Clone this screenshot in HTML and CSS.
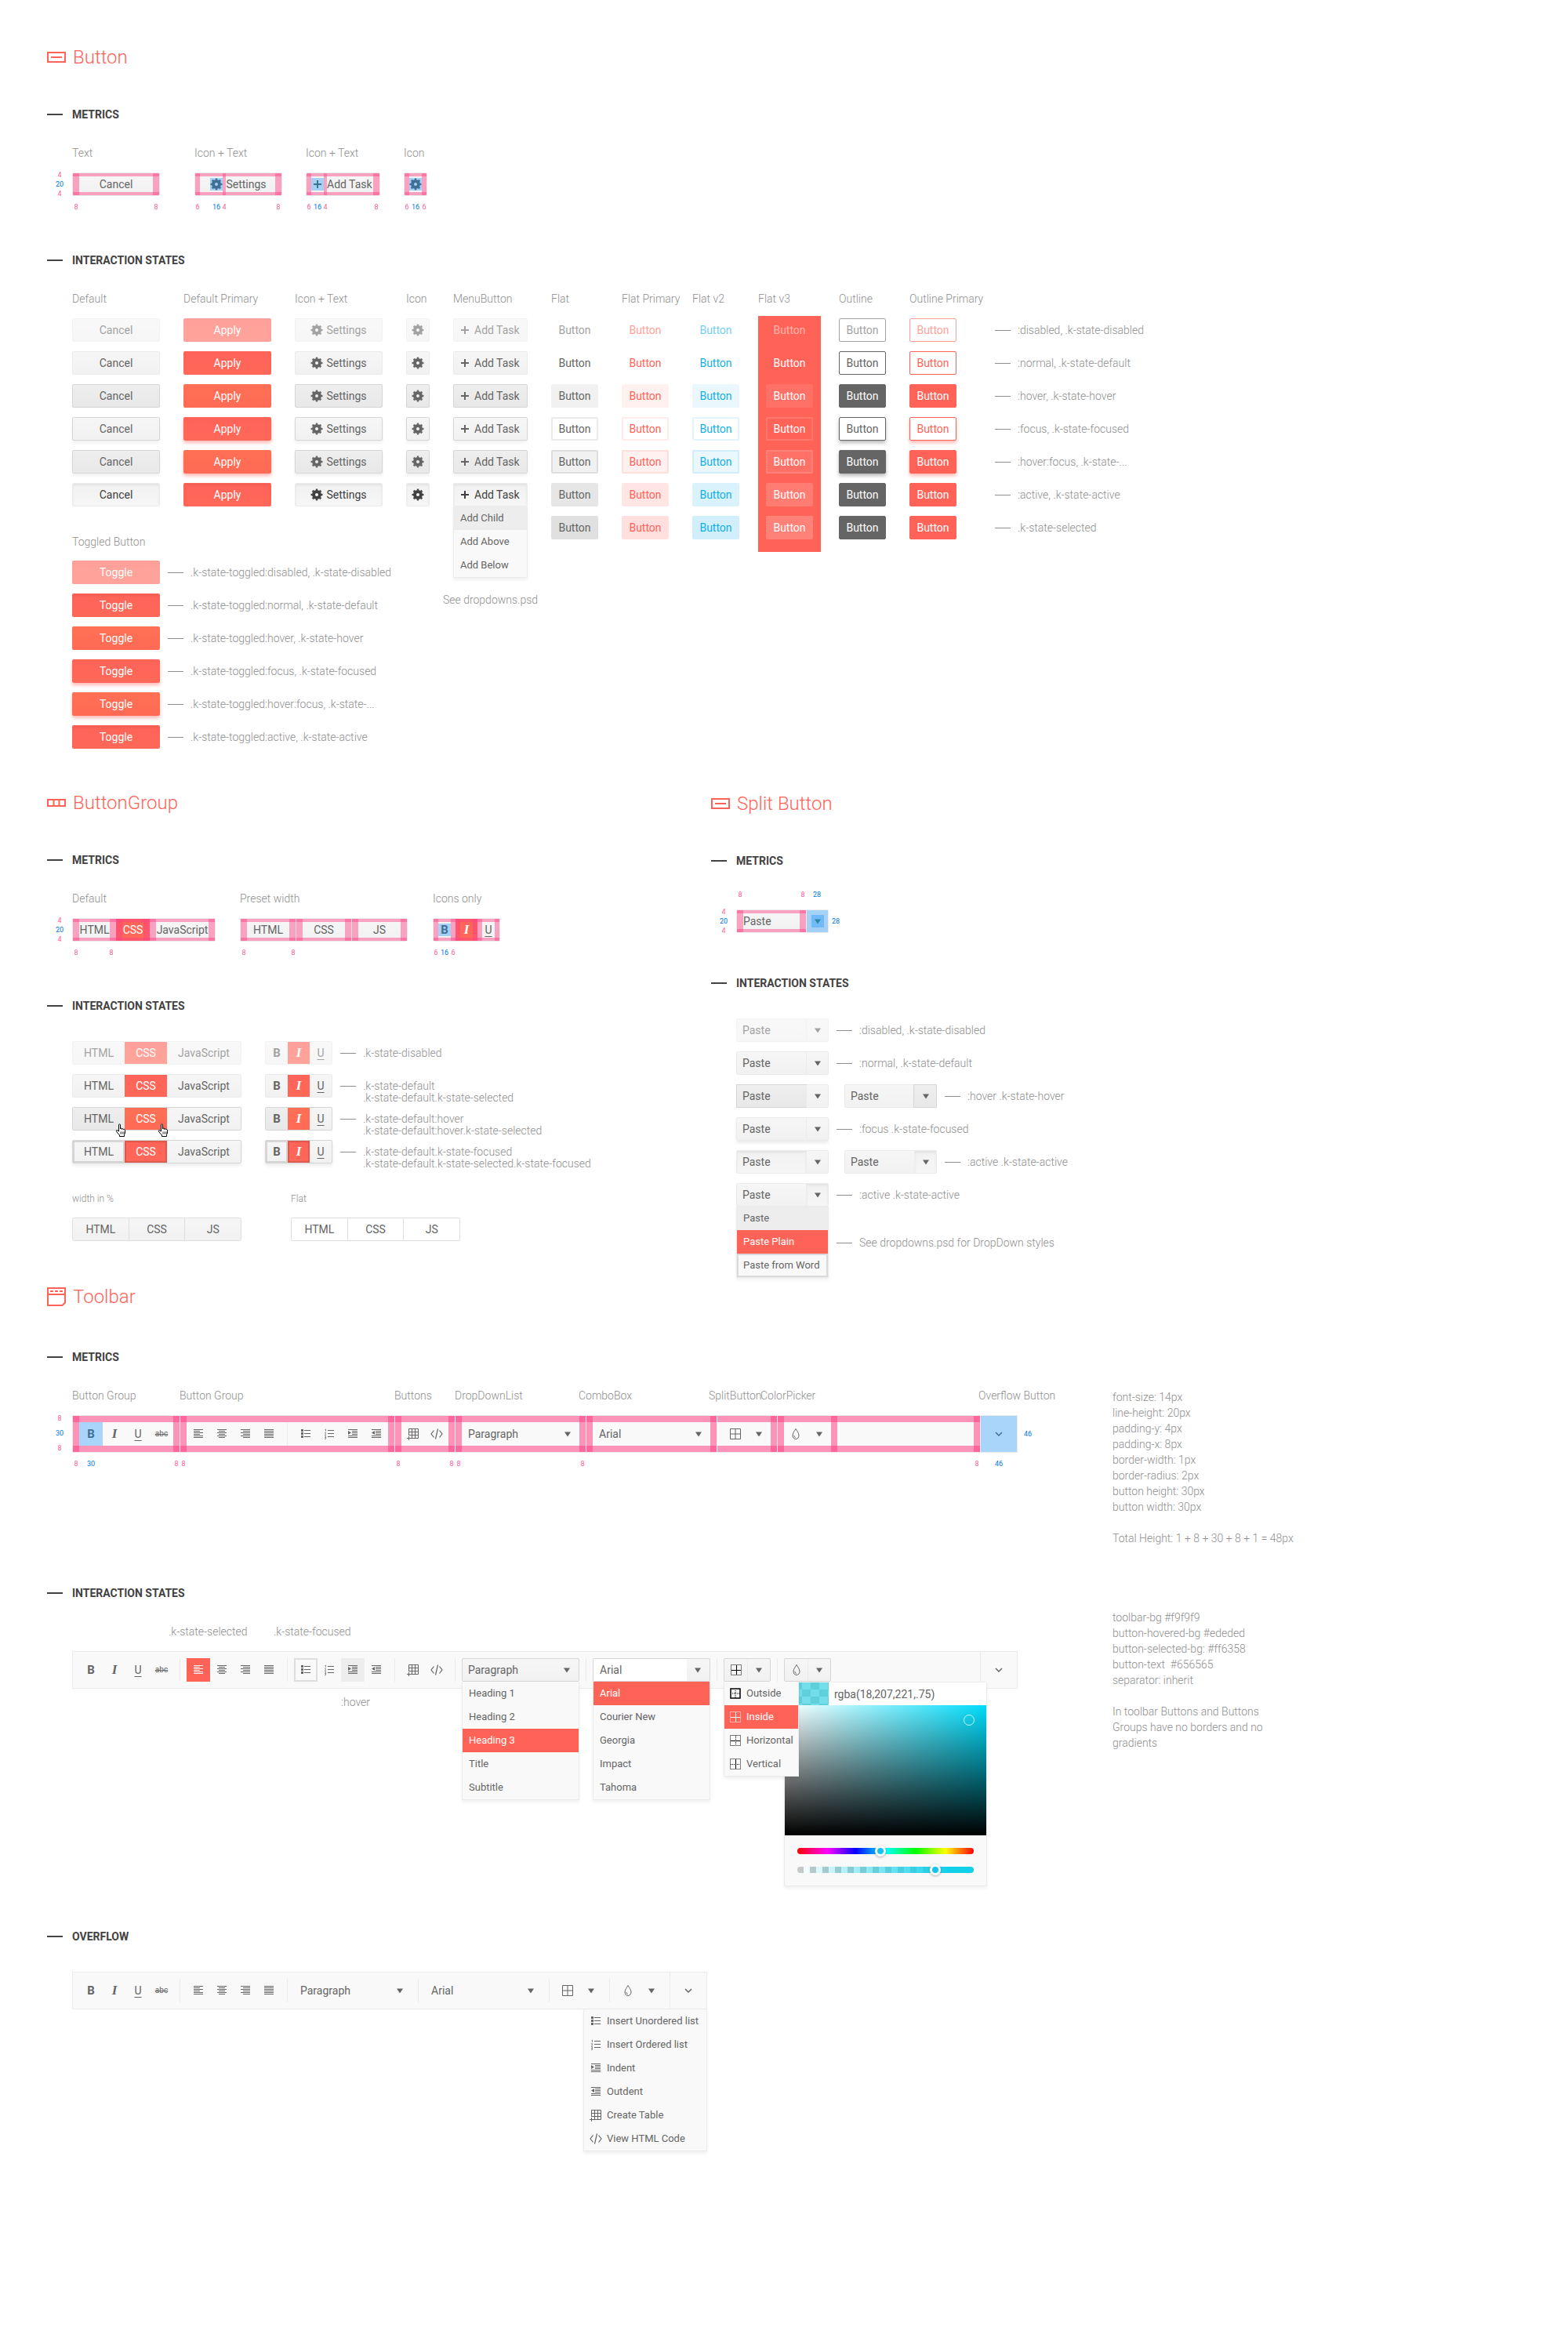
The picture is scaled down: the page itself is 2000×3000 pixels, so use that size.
FILE: index.html
```html
<!DOCTYPE html>
<html lang="en">
<head>
<meta charset="utf-8">
<title>Button, ButtonGroup, Split Button and Toolbar</title>
<link rel="stylesheet" href="styles.css">
</head>
<body>
<svg class="sprite" aria-hidden="true">
  <symbol id="gear" viewBox="0 0 16 16"><circle cx="8" cy="8" r="4" fill="none" stroke="currentColor" stroke-width="4"/><circle cx="8" cy="8" r="6.5" fill="none" stroke="currentColor" stroke-width="2" pathLength="16" stroke-dasharray="1 1" stroke-dashoffset=".5"/></symbol>
  <symbol id="plus" viewBox="0 0 16 16"><path d="M8 3v10M3 8h10" stroke="currentColor" stroke-width="2"/></symbol>
  <symbol id="caret" viewBox="0 0 16 16"><path d="M4 5.500h8l-4 6z" fill="currentColor"/></symbol>
  <symbol id="chevron" viewBox="0 0 16 16"><path d="M4 6l4 4 4-4" fill="none" stroke="currentColor" stroke-width="1.500"/></symbol>
  <symbol id="left" viewBox="0 0 16 16"><path d="M2 2.500h12M2 4.500h8M2 6.500h12M2 8.500h8M2 10.500h12M2 12.500h12" stroke="currentColor"/></symbol>
  <symbol id="center" viewBox="0 0 16 16"><path d="M2 2.500h12M4 4.500h8M2 6.500h12M4 8.500h8M2 10.500h12M4 12.500h8" stroke="currentColor"/></symbol>
  <symbol id="right" viewBox="0 0 16 16"><path d="M2 2.500h12M5 4.500h9M2 6.500h12M5 8.500h9M2 10.500h12M5 12.500h9" stroke="currentColor"/></symbol>
  <symbol id="justify" viewBox="0 0 16 16"><path d="M2 2.500h12M2 4.500h12M2 6.500h12M2 8.500h12M2 10.500h12M2 12.500h12" stroke="currentColor"/></symbol>
  <symbol id="ul" viewBox="0 0 16 16"><path d="M6 3.500h8M6 7.500h8M6 11.500h8" stroke="currentColor"/><path d="M2 3.500h3M2 7.500h3M2 11.500h3" stroke="currentColor" stroke-width="3"/></symbol>
  <symbol id="ol" viewBox="0 0 16 16"><path d="M6 3.500h8M6 7.500h8M6 11.500h8" stroke="currentColor"/><path d="M2.500 2.500l1-.5v3M2 6.500h1.500v1L2.500 9H4M2 10.500h1.500v4H2M2 12.500h1.500" fill="none" stroke="currentColor" stroke-width=".7"/></symbol>
  <symbol id="indent" viewBox="0 0 16 16"><path d="M2 2.500h12M7 4.500h7M7 6.500h7M7 8.500h7M2 10.500h12M2 12.500h12" stroke="currentColor"/><path d="M2 4l4 2.500L2 9z" fill="currentColor"/></symbol>
  <symbol id="outdent" viewBox="0 0 16 16"><path d="M2 2.500h12M7 4.500h7M7 6.500h7M7 8.500h7M2 10.500h12M2 12.500h12" stroke="currentColor"/><path d="M6 4L2 6.500 6 9z" fill="currentColor"/></symbol>
  <symbol id="table" viewBox="0 0 16 16"><path d="M2.500 10V1.500h12v12H5M6.500 1.500v12M10.500 1.500v12M2.500 5.500h12M2.500 9.500h12M2.500 11v5M0 13.500h5" fill="none" stroke="currentColor"/></symbol>
  <symbol id="code" viewBox="0 0 16 16"><path d="M4.500 3.500L1 8l3.500 4.500M11.500 3.500L15 8l-3.500 4.500M9.500 1.500l-3 13" fill="none" stroke="currentColor" stroke-width="1.200"/></symbol>
  <symbol id="grid" viewBox="0 0 16 16"><path d="M1.500 1.500h13v13h-13zM8 1.500v13M1.500 8h13" fill="none" stroke="currentColor"/></symbol>
  <symbol id="drop" viewBox="0 0 16 16"><path d="M8 1.500C6.500 4 4 7 4 10a4 4.500 0 0 0 8 0C12 7 9.500 4 8 1.500zM5.800 10a2.500 2.500 0 0 0 2 2.500" fill="none" stroke="currentColor"/></symbol>
  <symbol id="b-outside" viewBox="0 0 16 16"><path d="M2 2h12v12H2z" fill="none" stroke="currentColor" stroke-width="1.500"/><path d="M8 4v9M4 8h9" stroke="currentColor" stroke-dasharray="1 1"/></symbol>
  <symbol id="b-inside" viewBox="0 0 16 16"><path d="M1.500 1.500h13v13h-13z" fill="none" stroke="currentColor" stroke-dasharray="1 1"/><path d="M8.500 2v12M2 8.500h12" stroke="currentColor"/></symbol>
  <symbol id="b-horizontal" viewBox="0 0 16 16"><path d="M1.500 1.500h13v13h-13zM8.500 2v12" fill="none" stroke="currentColor" stroke-dasharray="1 1"/><path d="M2 8.500h12" stroke="currentColor"/></symbol>
  <symbol id="b-vertical" viewBox="0 0 16 16"><path d="M1.500 1.500h13v13h-13zM2 8.500h12" fill="none" stroke="currentColor" stroke-dasharray="1 1"/><path d="M8.500 2v12" stroke="currentColor"/></symbol>
  <symbol id="hand" viewBox="0 0 15 17"><path d="M4.500 10V1.800c0-1.300 2-1.300 2 0V7c0-1.200 2-1.200 2 0v.5c0-1.200 2-1 2 .2V8c0-1 2-.8 2 .4V12l-1 2.500v2h-6v-1.500L2 11c-1.200-1.800-.7-3 1-2z" fill="#fff" stroke="#000"/><path d="M7 10.500v3M9 10.500v3M11 10.500v3" stroke="#000" stroke-width=".8"/></symbol>
</svg>

<main class="sheet">
<section>
  <h1 class="title"><svg class="mark" viewBox="0 0 24 24"><path d="M1 6h22v12H1zM5 12h14" fill="none" stroke="currentColor" stroke-width="2"/></svg>Button</h1>

  <h2 class="sub">Metrics</h2>
  <div class="metrics">
    <div class="vruler"><span>4</span><span class="size">20</span><span>4</span></div>
    <div class="spec spec-text"><p class="label">Text</p>
      <button class="btn wide pad-text">Cancel</button>
      <div class="ruler ends"><span>8</span><span>8</span></div></div>
    <div class="spec spec-settings"><p class="label">Icon + Text</p>
      <button class="btn wide pad-settings"><svg class="ico sized"><use href="#gear"/></svg>Settings</button>
      <div class="ruler r-settings"><span>6</span><span class="size">16</span><span>4</span><span>8</span></div></div>
    <div class="spec spec-add"><p class="label">Icon + Text</p>
      <button class="btn menu pad-add"><svg class="ico sized"><use href="#plus"/></svg>Add Task</button>
      <div class="ruler r-add"><span>6</span><span class="size">16</span><span>4</span><span>8</span></div></div>
    <div class="spec"><p class="label">Icon</p>
      <button class="btn square pad-icon" aria-label="Settings"><svg class="ico sized"><use href="#gear"/></svg></button>
      <div class="ruler r-icon"><span>6</span><span class="size">16</span><span>6</span></div></div>
  </div>

  <h2 class="sub after-ruler">Interaction States</h2>
  <div class="states">
    <div class="states-main">
      <div class="matrix matrix-main">
        <div class="col"><p class="label">Default</p>
          <button class="btn wide disabled" disabled>Cancel</button>
          <button class="btn wide">Cancel</button>
          <button class="btn wide hover">Cancel</button>
          <button class="btn wide focus">Cancel</button>
          <button class="btn wide hover focus">Cancel</button>
          <button class="btn wide active">Cancel</button></div>
        <div class="col"><p class="label">Default Primary</p>
          <button class="btn wide primary disabled" disabled>Apply</button>
          <button class="btn wide primary">Apply</button>
          <button class="btn wide primary hover">Apply</button>
          <button class="btn wide primary focus">Apply</button>
          <button class="btn wide primary hover focus">Apply</button>
          <button class="btn wide primary active">Apply</button></div>
        <div class="col"><p class="label">Icon + Text</p>
          <button class="btn wide disabled" disabled><svg class="ico"><use href="#gear"/></svg>Settings</button>
          <button class="btn wide"><svg class="ico"><use href="#gear"/></svg>Settings</button>
          <button class="btn wide hover"><svg class="ico"><use href="#gear"/></svg>Settings</button>
          <button class="btn wide focus"><svg class="ico"><use href="#gear"/></svg>Settings</button>
          <button class="btn wide hover focus"><svg class="ico"><use href="#gear"/></svg>Settings</button>
          <button class="btn wide active"><svg class="ico"><use href="#gear"/></svg>Settings</button></div>
        <div class="col"><p class="label">Icon</p>
          <button class="btn square disabled" disabled aria-label="Settings"><svg class="ico"><use href="#gear"/></svg></button>
          <button class="btn square" aria-label="Settings"><svg class="ico"><use href="#gear"/></svg></button>
          <button class="btn square hover" aria-label="Settings"><svg class="ico"><use href="#gear"/></svg></button>
          <button class="btn square focus" aria-label="Settings"><svg class="ico"><use href="#gear"/></svg></button>
          <button class="btn square hover focus" aria-label="Settings"><svg class="ico"><use href="#gear"/></svg></button>
          <button class="btn square active" aria-label="Settings"><svg class="ico"><use href="#gear"/></svg></button></div>
      </div>
      <div class="toggled">
        <p class="label">Toggled Button</p>
        <div class="line"><button class="btn wide primary disabled" disabled>Toggle</button><span class="note">.k-state-toggled:disabled, .k-state-disabled</span></div>
        <div class="line"><button class="btn wide primary active">Toggle</button><span class="note">.k-state-toggled:normal, .k-state-default</span></div>
        <div class="line"><button class="btn wide primary hover">Toggle</button><span class="note">.k-state-toggled:hover, .k-state-hover</span></div>
        <div class="line"><button class="btn wide primary focus">Toggle</button><span class="note">.k-state-toggled:focus, .k-state-focused</span></div>
        <div class="line"><button class="btn wide primary hover focus">Toggle</button><span class="note">.k-state-toggled:hover:focus, .k-state-...</span></div>
        <div class="line"><button class="btn wide primary active">Toggle</button><span class="note">.k-state-toggled:active, .k-state-active</span></div>
      </div>
    </div>
    <div class="matrix matrix-more">
      <div class="col col-menu"><p class="label">MenuButton</p>
        <button class="btn menu disabled" disabled><svg class="ico"><use href="#plus"/></svg>Add Task</button>
        <button class="btn menu"><svg class="ico"><use href="#plus"/></svg>Add Task</button>
        <button class="btn menu hover"><svg class="ico"><use href="#plus"/></svg>Add Task</button>
        <button class="btn menu focus"><svg class="ico"><use href="#plus"/></svg>Add Task</button>
        <button class="btn menu hover focus"><svg class="ico"><use href="#plus"/></svg>Add Task</button>
        <div class="drop"><button class="btn menu active"><svg class="ico"><use href="#plus"/></svg>Add Task</button>
          <ul class="list"><li class="over">Add Child</li><li>Add Above</li><li>Add Below</li></ul></div>
        <p class="caption">See dropdowns.psd</p></div>
      <div class="col"><p class="label">Flat</p>
        <button class="flat disabled" disabled>Button</button><button class="flat">Button</button><button class="flat hover">Button</button><button class="flat focus">Button</button><button class="flat hover focus">Button</button><button class="flat active">Button</button><button class="flat selected">Button</button></div>
      <div class="col red"><p class="label">Flat Primary</p>
        <button class="flat disabled" disabled>Button</button><button class="flat">Button</button><button class="flat hover">Button</button><button class="flat focus">Button</button><button class="flat hover focus">Button</button><button class="flat active">Button</button><button class="flat selected">Button</button></div>
      <div class="col blue"><p class="label">Flat v2</p>
        <button class="flat disabled" disabled>Button</button><button class="flat">Button</button><button class="flat hover">Button</button><button class="flat focus">Button</button><button class="flat hover focus">Button</button><button class="flat active">Button</button><button class="flat selected">Button</button></div>
      <div class="col col-panel"><p class="label">Flat v3</p>
        <div class="panel white">
        <button class="flat disabled" disabled>Button</button><button class="flat">Button</button><button class="flat hover">Button</button><button class="flat focus">Button</button><button class="flat hover focus">Button</button><button class="flat active">Button</button><button class="flat selected">Button</button></div></div>
      <div class="col"><p class="label">Outline</p>
        <button class="outline disabled" disabled>Button</button><button class="outline">Button</button><button class="outline hover">Button</button><button class="outline focus">Button</button><button class="outline hover focus">Button</button><button class="outline active">Button</button><button class="outline selected">Button</button></div>
      <div class="col red"><p class="label">Outline Primary</p>
        <button class="outline disabled" disabled>Button</button><button class="outline">Button</button><button class="outline hover">Button</button><button class="outline focus">Button</button><button class="outline hover focus">Button</button><button class="outline active">Button</button><button class="outline selected">Button</button></div>
      <div class="col col-notes">
        <span class="note">:disabled, .k-state-disabled</span><span class="note">:normal, .k-state-default</span><span class="note">:hover, .k-state-hover</span><span class="note">:focus, .k-state-focused</span><span class="note">:hover:focus, .k-state-...</span><span class="note">:active, .k-state-active</span><span class="note">.k-state-selected</span></div>
    </div>
  </div>
</section>

<div class="pair">
<section class="pair-group">
  <h1 class="title"><svg class="mark" viewBox="0 0 24 24"><path d="M1 8h22v8H1zM8.500 8v8M15.500 8v8" fill="none" stroke="currentColor" stroke-width="2"/></svg>ButtonGroup</h1>
  <h2 class="sub">Metrics</h2>
  <div class="metrics">
    <div class="vruler"><span>4</span><span class="size">20</span><span>4</span></div>
    <div class="spec spec-group"><p class="label">Default</p>
      <div class="group snug"><button class="pad-text">HTML</button><button class="on pad-text">CSS</button><button class="pad-text">JavaScript</button></div>
      <div class="ruler r-group"><span>8</span><span>8</span></div></div>
    <div class="spec spec-preset"><p class="label">Preset width</p>
      <div class="group even"><button class="pad-text">HTML</button><button class="pad-text">CSS</button><button class="pad-text">JS</button></div>
      <div class="ruler r-preset"><span>8</span><span>8</span></div></div>
    <div class="spec"><p class="label">Icons only</p>
      <div class="group format"><button class="pad-icon"><b class="sized">B</b></button><button class="on pad-icon"><i>I</i></button><button class="pad-icon"><u>U</u></button></div>
      <div class="ruler r-icon"><span>6</span><span class="size">16</span><span>6</span></div></div>
  </div>

  <h2 class="sub after-ruler">Interaction States</h2>
  <div class="rows">
    <div class="line"><div class="group text disabled"><button disabled>HTML</button><button class="on" disabled>CSS</button><button disabled>JavaScript</button></div>
      <div class="group format disabled"><button disabled><b>B</b></button><button class="on" disabled><i>I</i></button><button disabled><u>U</u></button></div>
      <span class="note">.k-state-disabled</span></div>
    <div class="line"><div class="group text"><button>HTML</button><button class="on">CSS</button><button>JavaScript</button></div>
      <div class="group format"><button><b>B</b></button><button class="on"><i>I</i></button><button><u>U</u></button></div>
      <span class="note">.k-state-default<br>.k-state-default.k-state-selected</span></div>
    <div class="line"><div class="group text strong"><button class="hover">HTML<svg class="pointer"><use href="#hand"/></svg></button><button class="on hover">CSS<svg class="pointer"><use href="#hand"/></svg></button><button>JavaScript</button></div>
      <div class="group format strong"><button class="hover"><b>B</b></button><button class="on hover"><i>I</i></button><button><u>U</u></button></div>
      <span class="note">.k-state-default:hover<br>.k-state-default:hover.k-state-selected</span></div>
    <div class="line"><div class="group text strong raised"><button class="focus">HTML</button><button class="on focus">CSS</button><button>JavaScript</button></div>
      <div class="group format strong raised"><button class="focus"><b>B</b></button><button class="on focus"><i>I</i></button><button><u>U</u></button></div>
      <span class="note">.k-state-default.k-state-focused<br>.k-state-default.k-state-selected.k-state-focused</span></div>
  </div>
  <div class="variants">
    <div><p class="label small">width in %</p>
      <div class="group even full"><button>HTML</button><button>CSS</button><button>JS</button></div></div>
    <div><p class="label small">Flat</p>
      <div class="group even full plain"><button>HTML</button><button>CSS</button><button>JS</button></div></div>
  </div>
</section>

<section class="pair-split">
  <h1 class="title"><svg class="mark" viewBox="0 0 24 24"><path d="M1 6h22v12H1zM5 12h14" fill="none" stroke="currentColor" stroke-width="2"/></svg>Split Button</h1>
  <h2 class="sub">Metrics</h2>
  <div class="metrics">
    <div class="vruler plain"><span>4</span><span class="size">20</span><span>4</span></div>
    <div class="spec">
      <div class="ruler r-split"><span>8</span><span>8</span><span class="size">28</span></div>
      <div class="split"><button class="pad-text">Paste</button><button class="boxed" aria-label="More"><svg class="ico"><use href="#caret"/></svg></button></div></div>
    <span class="side size">28</span>
  </div>
  <h2 class="sub split-states">Interaction States</h2>
  <div class="rows">
    <div class="line"><div class="split disabled"><button disabled>Paste</button><button disabled aria-label="More"><svg class="ico"><use href="#caret"/></svg></button></div><span class="note">:disabled, .k-state-disabled</span></div>
    <div class="line"><div class="split"><button>Paste</button><button aria-label="More"><svg class="ico"><use href="#caret"/></svg></button></div><span class="note">:normal, .k-state-default</span></div>
    <div class="line"><div class="split"><button class="hover">Paste</button><button aria-label="More"><svg class="ico"><use href="#caret"/></svg></button></div><div class="split second"><button>Paste</button><button class="hover" aria-label="More"><svg class="ico"><use href="#caret"/></svg></button></div><span class="note">:hover .k-state-hover</span></div>
    <div class="line"><div class="split raised"><button>Paste</button><button aria-label="More"><svg class="ico"><use href="#caret"/></svg></button></div><span class="note">:focus .k-state-focused</span></div>
    <div class="line"><div class="split"><button class="active">Paste</button><button aria-label="More"><svg class="ico"><use href="#caret"/></svg></button></div><div class="split second"><button>Paste</button><button class="active" aria-label="More"><svg class="ico"><use href="#caret"/></svg></button></div><span class="note">:active .k-state-active</span></div>
    <div class="line tall"><div class="drop"><div class="split"><button>Paste</button><button class="active" aria-label="More"><svg class="ico"><use href="#caret"/></svg></button></div>
      <ul class="list"><li class="over">Paste</li><li class="chosen">Paste Plain</li><li class="framed">Paste from Word</li></ul></div>
      <div class="notes"><span class="note">:active .k-state-active</span><span class="note">See dropdowns.psd for DropDown styles</span></div></div>
  </div>
</section>
</div>

<section class="toolbars">
  <h1 class="title"><svg class="mark" viewBox="0 0 24 24"><path d="M1 1h22v18.500L19.500 23H1zM1 9h22" fill="none" stroke="currentColor" stroke-width="2"/><path d="M4 5h16" stroke="currentColor" stroke-width="2" stroke-dasharray="4 2"/></svg>Toolbar</h1>

  <div class="described">
    <div class="demo">
      <h2 class="sub">Metrics</h2>
      <div class="metrics">
        <div class="vruler far"><span>8</span><span class="size">30</span><span>8</span></div>
        <div class="spec">
          <div class="tb-labels"><p class="label">Button Group</p><p class="label">Button Group</p><p class="label">Buttons</p><p class="label">DropDownList</p><p class="label">ComboBox</p><p class="label">SplitButton</p><p class="label">ColorPicker</p><p class="label">Overflow Button</p></div>
          <div class="toolbar measured">
            <div class="part"><button class="box"><b>B</b></button><button><i>I</i></button><button><u>U</u></button><button><s>abc</s></button></div>
            <span class="sep"></span>
            <div class="part"><button aria-label="Left"><svg class="ico"><use href="#left"/></svg></button><button aria-label="Center"><svg class="ico"><use href="#center"/></svg></button><button aria-label="Right"><svg class="ico"><use href="#right"/></svg></button><button aria-label="Justify"><svg class="ico"><use href="#justify"/></svg></button><span class="inner"></span><button aria-label="Bullets"><svg class="ico"><use href="#ul"/></svg></button><button aria-label="Numbers"><svg class="ico"><use href="#ol"/></svg></button><button aria-label="Indent"><svg class="ico"><use href="#indent"/></svg></button><button aria-label="Outdent"><svg class="ico"><use href="#outdent"/></svg></button></div>
            <span class="sep"></span>
            <div class="part"><button aria-label="Table"><svg class="ico"><use href="#table"/></svg></button><button aria-label="Code"><svg class="ico"><use href="#code"/></svg></button></div>
            <span class="sep"></span>
            <div class="part"><span class="picker"><select aria-label="Format"><option>Paragraph</option></select><svg class="ico"><use href="#caret"/></svg></span></div>
            <span class="sep"></span>
            <div class="part"><span class="picker"><input aria-label="Font" value="Arial"><svg class="ico"><use href="#caret"/></svg></span></div>
            <span class="sep"></span>
            <div class="part open-left"><button aria-label="Borders"><svg class="ico"><use href="#grid"/></svg></button><button aria-label="More"><svg class="ico"><use href="#caret"/></svg></button></div>
            <span class="sep"></span>
            <div class="part"><button aria-label="Color"><svg class="ico"><use href="#drop"/></svg></button><button aria-label="More"><svg class="ico"><use href="#caret"/></svg></button></div>
            <div class="part open-left rest"></div>
            <button class="more box" aria-label="Overflow"><svg class="ico"><use href="#chevron"/></svg></button>
          </div>
          <div class="ruler r-toolbar"><span>8</span><span class="size">30</span><span>8</span><span>8</span><span>8</span><span>8</span><span>8</span><span>8</span><span>8</span><span class="size">46</span></div>
        </div>
        <span class="side far size">46</span>
      </div>
    </div>
    <aside class="facts facts-size"><p>font-size: 14px</p><p>line-height: 20px</p><p>padding-y: 4px</p><p>padding-x: 8px</p><p>border-width: 1px</p><p>border-radius: 2px</p><p>button height: 30px</p><p>button width: 30px</p><p class="apart">Total Height: 1 + 8 + 30 + 8 + 1 = 48px</p></aside>
  </div>

  <div class="described second-demo">
    <div class="demo">
      <h2 class="sub">Interaction States</h2>
      <div class="body">
        <div class="state-labels"><p class="label">.k-state-selected</p><p class="label">.k-state-focused</p></div>
        <div class="toolbar">
          <div class="part"><button><b>B</b></button><button><i>I</i></button><button><u>U</u></button><button><s>abc</s></button></div>
          <span class="sep"></span>
          <div class="part"><button class="chosen" aria-label="Left"><svg class="ico"><use href="#left"/></svg></button><button aria-label="Center"><svg class="ico"><use href="#center"/></svg></button><button aria-label="Right"><svg class="ico"><use href="#right"/></svg></button><button aria-label="Justify"><svg class="ico"><use href="#justify"/></svg></button><span class="inner"></span><button class="framed" aria-label="Bullets"><svg class="ico"><use href="#ul"/></svg></button><button aria-label="Numbers"><svg class="ico"><use href="#ol"/></svg></button><button class="over" aria-label="Indent"><svg class="ico"><use href="#indent"/></svg></button><button aria-label="Outdent"><svg class="ico"><use href="#outdent"/></svg></button></div>
          <span class="sep"></span>
          <div class="part"><button aria-label="Table"><svg class="ico"><use href="#table"/></svg></button><button aria-label="Code"><svg class="ico"><use href="#code"/></svg></button></div>
          <span class="sep"></span>
          <div class="part"><div class="anchor"><span class="picker opened"><select aria-label="Format"><option>Paragraph</option></select><svg class="ico"><use href="#caret"/></svg></span>
            <ul class="list popup"><li>Heading 1</li><li>Heading 2</li><li class="chosen">Heading 3</li><li>Title</li><li>Subtitle</li></ul></div></div>
          <span class="sep"></span>
          <div class="part"><div class="anchor"><span class="picker opened combo"><input aria-label="Font" value="Arial"><svg class="ico"><use href="#caret"/></svg></span>
            <ul class="list popup"><li class="chosen">Arial</li><li>Courier New</li><li>Georgia</li><li>Impact</li><li>Tahoma</li></ul></div></div>
          <span class="sep"></span>
          <div class="part"><div class="anchor front"><div class="split tool"><button class="dark" aria-label="Borders"><svg class="ico"><use href="#b-inside"/></svg></button><button aria-label="More"><svg class="ico"><use href="#caret"/></svg></button></div>
            <ul class="list popup borders"><li><svg class="ico dark"><use href="#b-outside"/></svg>Outside</li><li class="chosen"><svg class="ico"><use href="#b-inside"/></svg>Inside</li><li><svg class="ico dark"><use href="#b-horizontal"/></svg>Horizontal</li><li><svg class="ico dark"><use href="#b-vertical"/></svg>Vertical</li></ul></div></div>
          <span class="sep"></span>
          <div class="part"><div class="anchor"><div class="split tool"><button aria-label="Color"><svg class="ico"><use href="#drop"/></svg></button><button aria-label="More"><svg class="ico"><use href="#caret"/></svg></button></div>
            <div class="popup colors">
              <div class="value"><span class="swatch"></span><input aria-label="Color value" value="rgba(18,207,221,.75)"></div>
              <div class="field"><span class="ring"></span></div>
              <div class="sliders"><input type="range" class="hue" aria-label="Hue" value="47"><input type="range" class="alpha" aria-label="Opacity" value="80"></div>
            </div></div></div>
          <button class="more" aria-label="Overflow"><svg class="ico"><use href="#chevron"/></svg></button>
        </div>
        <p class="label hover-label">:hover</p>
      </div>
    </div>
    <aside class="facts facts-color"><p>toolbar-bg #f9f9f9</p><p>button-hovered-bg #ededed</p><p>button-selected-bg: #ff6358</p><p>button-text  #656565</p><p>separator: inherit</p><p class="apart">In toolbar Buttons and Buttons Groups have no borders and no gradients</p></aside>
  </div>

  <h2 class="sub">Overflow</h2>
  <div class="body overflow">
    <div class="toolbar">
      <div class="part"><button><b>B</b></button><button><i>I</i></button><button><u>U</u></button><button><s>abc</s></button></div>
      <span class="sep"></span>
      <div class="part"><button aria-label="Left"><svg class="ico"><use href="#left"/></svg></button><button aria-label="Center"><svg class="ico"><use href="#center"/></svg></button><button aria-label="Right"><svg class="ico"><use href="#right"/></svg></button><button aria-label="Justify"><svg class="ico"><use href="#justify"/></svg></button></div>
      <span class="sep"></span>
      <div class="part"><span class="picker"><select aria-label="Format"><option>Paragraph</option></select><svg class="ico"><use href="#caret"/></svg></span></div>
      <span class="sep"></span>
      <div class="part"><span class="picker"><input aria-label="Font" value="Arial"><svg class="ico"><use href="#caret"/></svg></span></div>
      <span class="sep"></span>
      <div class="part"><button aria-label="Borders"><svg class="ico"><use href="#grid"/></svg></button><button aria-label="More"><svg class="ico"><use href="#caret"/></svg></button></div>
      <span class="sep"></span>
      <div class="part"><button aria-label="Color"><svg class="ico"><use href="#drop"/></svg></button><button aria-label="More"><svg class="ico"><use href="#caret"/></svg></button></div>
      <button class="more" aria-label="Overflow"><svg class="ico"><use href="#chevron"/></svg></button>
    </div>
    <ul class="list tools"><li><svg class="ico"><use href="#ul"/></svg>Insert Unordered list</li><li><svg class="ico"><use href="#ol"/></svg>Insert Ordered list</li><li><svg class="ico"><use href="#indent"/></svg>Indent</li><li><svg class="ico"><use href="#outdent"/></svg>Outdent</li><li><svg class="ico"><use href="#table"/></svg>Create Table</li><li><svg class="ico"><use href="#code"/></svg>View HTML Code</li></ul>
  </div>
</section>
</main>
</body>
</html>
```
FILE: styles.css
```css
:root {
  --accent: #ff6358;
  --text: #656565;
  --muted: #8e8e8e;
  --line: #ebebeb;
  --line-strong: #d6d6d6;
  --pink: linear-gradient(rgba(255, 64, 133, .46), rgba(255, 64, 133, .46));
  --azure: rgba(0, 136, 255, .32);
  --face: linear-gradient(#f6f6f6, #f1f1f1);
  --face-hover: linear-gradient(#eeeeee, #e8e8e8);
  --face-active: linear-gradient(#f1f1f1, #f6f6f6);
  --red: linear-gradient(#ff6358, #ff6858);
  --red-hover: linear-gradient(#ff7055, #ff6a55);
}
* { box-sizing: border-box; }
body { margin: 0; background: #fff; color: var(--text); font: 14px/20px Roboto, "Liberation Sans", sans-serif; }
h1, h2, p, ul { margin: 0; padding: 0; }
ul { list-style: none; }
button, input, select { font: inherit; color: inherit; margin: 0; padding: 0; border: 0; border-radius: 0; background: none; outline: 0; }
.sprite { position: absolute; width: 0; height: 0; }
.sheet { padding: 57px 60px 60px; }
.ico { flex: none; width: 16px; height: 16px; }
.dark { color: #000; }

/* headings and labels */
.title { display: flex; align-items: center; gap: 9px; height: 32px; margin-bottom: 47px; color: var(--accent); font-size: 24px; line-height: 32px; font-weight: 300; }
.mark { width: 24px; height: 24px; }
.sub { display: flex; align-items: center; gap: 12px; color: #424242; font-size: 14px; line-height: 20px; font-weight: 700; text-transform: uppercase; }
.sub::before { content: ""; width: 20px; height: 2px; background: currentColor; }
.sub.after-ruler { margin-top: 52px; }
.label, .caption, .note, .facts { color: var(--muted); font-weight: 300; white-space: nowrap; }
.label { height: 20px; margin-bottom: 15px; }
.label.small { height: 16px; margin-bottom: 16px; font-size: 12px; line-height: 16px; }
.note { display: flex; gap: 9px; align-items: flex-start; line-height: 15px; }
.note::before { content: ""; flex: none; width: 20px; height: 1px; margin-top: 7px; background: var(--muted); }

/* measuring marks */
.metrics { display: flex; align-items: flex-start; margin-top: 29px; }
.vruler { display: flex; flex-direction: column; align-items: center; flex: none; width: 32px; padding: 0 10px; margin-top: 32px; }
.vruler span, .ruler span, .side { display: flex; justify-content: center; color: #fa5f99; font-size: 9px; line-height: 12px; }
.vruler .size, .ruler .size, .side.size { color: #0078e6; }
.vruler.plain { height: 33px; margin-top: 22px; }
.vruler.far { margin-top: 30px; }
.vruler.far span { line-height: 19px; }
.ruler { display: grid; height: 12px; margin-top: 8px; padding: 0 1px; }
.ruler.ends { display: flex; justify-content: space-between; }
.ends span { width: 8px; }
.r-settings { grid-template-columns: 6px 29px 4px 1fr 8px; }
.r-settings .size { padding-left: 13px; }
.r-add { grid-template-columns: 6px 16px 4px 1fr 8px; }
.r-settings span:last-child, .r-add span:last-child { grid-column: 5; }
.r-icon { grid-template-columns: 6px 16px 6px; }
.r-group { grid-template-columns: 8px 8px; gap: 37px; }
.r-preset { grid-template-columns: 8px 8px; gap: 55px; }
.ruler.r-split { grid-template-columns: 8px 72px 8px 28px; margin: 0 0 13px; }
.r-split span:nth-child(2) { grid-column: 3; }
.side { margin: 34px 0 0 4px; }
.side.far { margin: 53px 0 0 8px; }
button.pad-text { background: var(--pink) left / 8px 100% no-repeat, var(--pink) right / 8px 100% no-repeat, var(--pink) top / 100% 4px no-repeat, var(--pink) bottom / 100% 4px no-repeat, var(--base, var(--face)); }
button.pad-settings { background: var(--pink) left / 6px 100% no-repeat, var(--pink) 35px 0 / 4px 100% no-repeat, var(--pink) right / 8px 100% no-repeat, var(--pink) top / 100% 4px no-repeat, var(--pink) bottom / 100% 4px no-repeat, var(--face); }
button.pad-add { background: var(--pink) left / 6px 100% no-repeat, var(--pink) 22px 0 / 4px 100% no-repeat, var(--pink) right / 8px 100% no-repeat, var(--pink) top / 100% 4px no-repeat, var(--pink) bottom / 100% 4px no-repeat, var(--face); }
button.pad-icon { background: var(--pink) left / 6px 100% no-repeat, var(--pink) right / 6px 100% no-repeat, var(--pink) top / 100% 4px no-repeat, var(--pink) bottom / 100% 4px no-repeat, var(--base, var(--face)); }
.sized { background: var(--azure); color: #3f6f93; }
.spec-text, .spec-settings { width: 112px; }
.spec-text { margin-right: 44px; }
.spec-settings { margin-right: 30px; }
.spec-add { width: 95px; margin-right: 30px; }
.spec-group { width: 214px; }
.spec-preset { width: 214px; margin-right: 32px; }

/* buttons */
.btn { display: flex; align-items: center; justify-content: center; gap: 4px; height: 30px; border: 1px solid var(--line); border-radius: 2px; background-image: var(--face); }
.btn.wide { width: 112px; }
.btn.square { width: 30px; }
.btn.menu { width: 95px; justify-content: flex-start; padding-left: 6px; }
.btn.hover { background-image: var(--face-hover); border-color: var(--line-strong); }
.btn.focus { border-color: var(--line-strong); box-shadow: 0 3px 4px rgba(0, 0, 0, .06); }
.btn.active { background-image: var(--face-active); box-shadow: inset 0 2px 3px rgba(0, 0, 0, .06); color: #404040; }
.btn.primary { border-color: transparent; background: var(--red) border-box; color: #fff; }
.btn.primary.hover { background: var(--red-hover) border-box; }
.btn.primary.focus { box-shadow: 0 3px 4px rgba(255, 99, 88, .45); }
.disabled { opacity: .6; }
.flat, .outline { width: 60px; height: 30px; border-radius: 2px; color: var(--tone); }
.col { --tone: #656565; }
.col.red { --tone: #ff6358; }
.col.blue { --tone: #12aeea; }
.flat { border: 2px solid transparent; }
.flat.hover { background: color-mix(in srgb, var(--tone) 9%, transparent); }
.flat.focus { border-color: color-mix(in srgb, var(--tone) 13%, transparent); }
.flat.active { background: color-mix(in srgb, var(--tone) 16%, transparent); }
.flat.selected { background: color-mix(in srgb, var(--tone) 20%, transparent); }
.outline { border: 1px solid var(--tone); }
.outline.focus { box-shadow: 0 3px 4px color-mix(in srgb, var(--tone) 45%, transparent); }
.outline.hover, .outline.active, .outline.selected { background: var(--tone); color: #fff; }

.states { display: flex; margin: 29px 0 0 32px; }
.states-main { flex: none; width: 486px; }
.matrix { display: grid; align-items: start; }
.matrix-main { grid-template-columns: 142px 142px 142px 60px; }
.matrix-more { grid-template-columns: 125px 90px 90px 84px 103px 90px 109px auto; }
.col, .panel { display: flex; flex-direction: column; align-items: flex-start; gap: 12px; }
.col .label { margin-bottom: 3px; }
.col-panel .label { margin-bottom: 0; }
.panel { --tone: #fff; padding: 3px 10px 16px; background: var(--accent); }
.panel .disabled { opacity: .5; }
.col-notes { padding-top: 35px; }
.col-notes .note { height: 30px; padding-top: 8px; }
.col-menu { width: 95px; }
.caption { align-self: center; margin-top: 6px; }
.toggled { display: flex; flex-direction: column; gap: 12px; margin-top: 35px; }
.toggled .label { margin-bottom: 2px; }
.line { display: flex; align-items: flex-start; height: 30px; }
.line .note { margin: 8px 0 0 10px; }

/* lists */
.list { border: 1px solid var(--line); border-top: 0; background: #f9f9f9; box-shadow: 0 3px 4px rgba(0, 0, 0, .06); font-size: 13px; }
.list li { display: flex; align-items: center; gap: 6px; height: 30px; padding: 0 8px; white-space: nowrap; }
.over { background: #ededed; }
.list .chosen, .toolbar .chosen { background: var(--accent); color: #fff; }
.list .framed { border: 2px solid #dadada; padding: 0 6px; }

/* button groups */
.group, .split { display: flex; height: 30px; border: 1px solid var(--line); border-radius: 2px; background: var(--face); }
.group button, .split button { position: relative; display: flex; align-items: center; justify-content: center; height: 28px; }
.group .on { --base: var(--red); color: #fff; }
.group .on:not(.pad-text, .pad-icon) { background: var(--red); }
.group .hover, .split .hover { background: var(--face-hover); }
.group .on.hover:not(.pad-text) { background: var(--red-hover); }
.group .focus { box-shadow: inset 0 0 0 2px rgba(0, 0, 0, .12); }
.group.snug { width: 183px; }
.group.snug button { flex: 1 0 auto; padding: 0 8px; }
.group.text { width: 216px; }
.group.text button { flex: 66 0 0; }
.group.text button:nth-child(2) { flex-grow: 54; }
.group.text button:nth-child(3) { flex-grow: 94; }
.group.even button { flex: 1; }
.group.even button + button { border-left: 1px solid #dfdfdf; }
.group.full { width: 216px; border-color: #dfdfdf; }
.group.plain { background: #fff; }
.group.format { width: 86px; margin: 0; }
.group.format button { width: 28px; }
.line .group.format { margin-left: 30px; }
.group.strong { border-color: var(--line-strong); }
.raised { box-shadow: 0 3px 4px rgba(0, 0, 0, .08); }
b, i, u, s { display: inline-flex; align-items: center; justify-content: center; width: 16px; height: 16px; }
b { font-size: 15px; }
i { font: italic bold 17px/16px "Liberation Serif", serif; }
u { text-underline-offset: 3px; }
s { width: auto; font-size: 10px; }
.pointer { position: absolute; top: 20px; right: -3px; z-index: 1; width: 15px; height: 17px; }
.pair { display: flex; margin-top: 53px; }
.pair-group { flex: none; width: 847px; }
.pair-split { padding-top: 1px; }
.rows { display: flex; flex-direction: column; gap: 12px; margin: 35px 0 0 32px; }
.variants { display: flex; gap: 63px; margin: 37px 0 0 32px; }

/* split buttons */
.split { width: 118px; }
.split button { width: 88px; padding-left: 7px; justify-content: flex-start; }
.split button.pad-text { padding-left: 8px; }
.split button + button { width: 28px; flex: 1; padding: 0; justify-content: center; border-left: 1px solid var(--line); }
.split .hover { box-shadow: 0 0 0 1px var(--line-strong); }
.split .active { background: var(--face-active); box-shadow: inset 0 2px 3px rgba(0, 0, 0, .06); }
.split.second { margin-left: 20px; }
.split .boxed { background: var(--azure); color: #2f8aa0; }
.boxed .ico { background: var(--azure); }
.pair-split .metrics { margin-top: 27px; }
.split-states { margin-top: 54px; }
.line.tall { height: auto; }
.pair-split .drop { width: 118px; }
.notes { display: flex; flex-direction: column; gap: 46px; }
.notes .note + .note { margin-top: 0; }

/* toolbars */
.toolbars { margin-top: 8px; }
.toolbars > .title { margin-bottom: 51px; }
.toolbar { position: relative; display: flex; height: 48px; border: 1px solid var(--line); background: #f9f9f9; }
.part { display: flex; padding: 8px; }
.toolbar .part > button, .more { display: flex; align-items: center; justify-content: center; width: 30px; height: 30px; }
.toolbar .framed { border: 2px solid #dedede; }
.toolbar .more { width: 47px; height: 46px; margin-left: auto; border-left: 1px solid var(--line); }
.sep, .inner { width: 1px; height: 30px; margin-top: 8px; background: var(--line); }
.inner { margin: 0 8px; }
.toolbar .box { background: var(--azure); color: #3f6f93; }
.measured .part { background: var(--pink) left / 8px 100% no-repeat, var(--pink) right / 8px 100% no-repeat, var(--pink) top / 100% 8px no-repeat, var(--pink) bottom / 100% 8px no-repeat; }
.measured .open-left { background: var(--pink) right / 8px 100% no-repeat, var(--pink) top / 100% 8px no-repeat, var(--pink) bottom / 100% 8px no-repeat; }
.measured { --pink: linear-gradient(rgba(255, 64, 133, .55), rgba(255, 64, 133, .55)); }
.measured .rest { flex: 1; }
.picker { display: flex; align-items: center; width: 150px; height: 30px; padding-right: 7px; }
.picker select, .picker input { flex: 1; width: 0; height: 28px; padding: 0 8px; appearance: none; }
.picker.opened { border: 1px solid var(--line-strong); border-radius: 2px; background: var(--face); }
.opened select { padding: 0 7px; }
.combo input { background: #fff; margin-right: 6px; }
.anchor { position: relative; }
.anchor.front { z-index: 2; }
.popup { position: absolute; top: 100%; left: 0; width: 150px; z-index: 1; }
.popup.borders { width: 96px; }
.borders li { padding: 0 6px; }
.split.tool { width: 60px; border-color: var(--line-strong); }
.split.tool button { width: 29px; padding: 0; justify-content: center; }
.tb-labels { display: grid; grid-template-columns: 137px 274px 77px 158px 166px 66px 278px 50px; }
.toolbars .spec { width: 1206px; }
.r-toolbar { grid-template-columns: 8px 30px 90px 8px 1px 8px 266px 8px 60px 8px 1px 8px 150px 8px 495px 8px 1px 46px; }
.r-toolbar span:nth-child(3) { grid-column: 4; }
.r-toolbar span:nth-child(4) { grid-column: 6; }
.r-toolbar span:nth-child(5) { grid-column: 8; }
.r-toolbar span:nth-child(6) { grid-column: 10; }
.r-toolbar span:nth-child(7) { grid-column: 12; }
.r-toolbar span:nth-child(8) { grid-column: 14; }
.r-toolbar span:nth-child(9) { grid-column: 16; }
.r-toolbar span:nth-child(10) { grid-column: 18; }
.described { display: flex; }
.demo { flex: none; width: 1359px; }
.second-demo { margin-top: 50px; margin-bottom: 227px; }
.body { margin: 29px 0 0 32px; width: 1206px; }
.state-labels { display: flex; gap: 28px; padding-left: 123px; }
.state-labels .label:first-child { width: 106px; }
.hover-label { margin: 7px 0 0 343px; }
.facts { width: 220px; }
.facts p { white-space: pre; }
.facts .apart { margin-top: 20px; }
.facts-size { padding-top: 51px; }
.facts-color { padding-top: 31px; }
.facts-color .apart { white-space: normal; }
.overflow { width: 810px; margin-top: 35px; }
.tools { width: 158px; margin-left: auto; }
.tools li { padding: 0 7px; }

/* color picker */
.popup.colors { width: 259px; border: 1px solid var(--line); border-radius: 2px; background: #f9f9f9; box-shadow: 0 3px 4px rgba(0, 0, 0, .06); }
.value { display: flex; height: 29px; }
.swatch { width: 56px; background: conic-gradient(#5fcfdc 25%, #73dde9 0 50%, #5fcfdc 0 75%, #73dde9 0) 0 0 / 22px 18px; }
.value input { flex: 1; width: 0; padding: 0 7px; background: #fff; }
.field { position: relative; height: 166px; background: linear-gradient(to top, #000, transparent), linear-gradient(to right, #fff, #00dcfa); }
.ring { position: absolute; top: 12px; right: 15px; width: 14px; height: 14px; border: 1px solid #bff6ff; border-radius: 50%; }
.sliders { display: flex; flex-direction: column; gap: 10px; padding: 13px 16px; }
.sliders input { appearance: none; width: 100%; height: 14px; background: none; }
.sliders input::-webkit-slider-runnable-track { height: 8px; border-radius: 4px; background: var(--track); }
.sliders input::-webkit-slider-thumb { appearance: none; width: 14px; height: 14px; margin-top: -3px; border: 3px solid #fff; border-radius: 50%; background: #12c4f2; box-shadow: 0 1px 3px rgba(0, 0, 0, .3); }
.hue { --track: linear-gradient(to right, #f00, #f0f 17%, #00f 33%, #0ff 50%, #0f0 67%, #ff0 84%, #f00); }
.alpha { --track: linear-gradient(to right, transparent, #12d0ea 85%), repeating-linear-gradient(to right, #c8c8c8 0 8px, #fff 8px 16px); }
```
